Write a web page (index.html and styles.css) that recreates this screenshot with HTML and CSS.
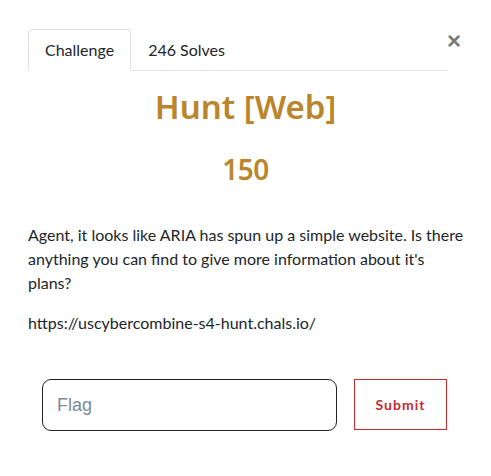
FILE: index.html
```html
<!DOCTYPE html>
<html>
<head>
<meta charset="utf-8">
<link rel="stylesheet" href="styles.css">
</head>
<body>
<div class="modal">
  <button class="close" aria-label="Close">&times;</button>
  <ul class="tabs">
    <li class="tab active">Challenge</li>
    <li class="tab">246 Solves</li>
  </ul>
  <h2 class="title">Hunt [Web]</h2>
  <h3 class="value">150</h3>
  <div class="desc">
    <p>Agent, it looks like ARIA has spun up a simple website. Is there anything you can find to give more information about it's plans?</p>
    <p>https://uscybercombine-s4-hunt.chals.io/</p>
  </div>
  <form class="submit-row">
    <input class="flag" type="text" placeholder="Flag">
    <button class="btn-submit" type="button">Submit</button>
  </form>
</div>
</body>
</html>
```

FILE: styles.css
```css
* { box-sizing: border-box; }
html, body { margin: 0; padding: 0; background: #fff; }
body {
  font-family: Lato, "Liberation Sans", sans-serif;
  color: #212529;
  font-size: 16px;
  line-height: 24px;
}
.modal {
  position: relative;
  padding: 29px 0 0 28px;
  width: 491px;
}
.close {
  position: absolute;
  top: 29px;
  left: 444px;
  width: 20px;
  height: 24px;
  border: 0;
  background: none;
  padding: 0;
  font-family: "Liberation Sans", Arial, sans-serif;
  font-size: 24px;
  font-weight: 700;
  line-height: 24px;
  color: #7a7a7a;
  cursor: pointer;
}
.tabs {
  list-style: none;
  margin: 0;
  padding: 0;
  display: flex;
  width: 420px;
  border-bottom: 1px solid #dee2e6;
}
.tab {
  padding: 8px 16px;
  border: 1px solid transparent;
  border-radius: 4px 4px 0 0;
  margin-bottom: -1px;
  color: #212529;
}
.tab.active {
  border-color: #dee2e6 #dee2e6 #fff;
  background: #fff;
}
.title {
  margin: 16px 0 0;
  width: 435px;
  text-align: center;
  font-family: "Noto Sans", sans-serif;
  font-weight: 600;
  font-size: 33px;
  line-height: 40px;
  color: #ba852c;
}
.value {
  margin: 24px 0 0;
  width: 435px;
  text-align: center;
  font-family: "Noto Sans", sans-serif;
  font-weight: 600;
  font-size: 28px;
  letter-spacing: -0.5px;
  line-height: 36px;
  color: #ba852c;
}
.desc {
  margin-top: 36px;
  width: 440px;
}
.desc p { margin: 0 0 16px; }
.submit-row {
  display: flex;
  gap: 17px;
  margin: 44px 0 0 14px;
  align-items: flex-start;
}
.flag {
  width: 295px;
  height: 52px;
  border: 1px solid #222;
  border-radius: 9px;
  padding: 0 14px;
  font-family: "Liberation Sans", Arial, sans-serif;
  font-size: 18px;
  color: #495057;
  outline: none;
}
.flag::placeholder { color: #7b8a99; }
.btn-submit {
  width: 93px;
  height: 51px;
  border: 1px solid #cc2b2b;
  background: #fff;
  color: #c62a35;
  font-family: Lato, sans-serif;
  font-weight: 700;
  font-size: 14px;
  letter-spacing: 1px;
  padding: 0;
}
```
